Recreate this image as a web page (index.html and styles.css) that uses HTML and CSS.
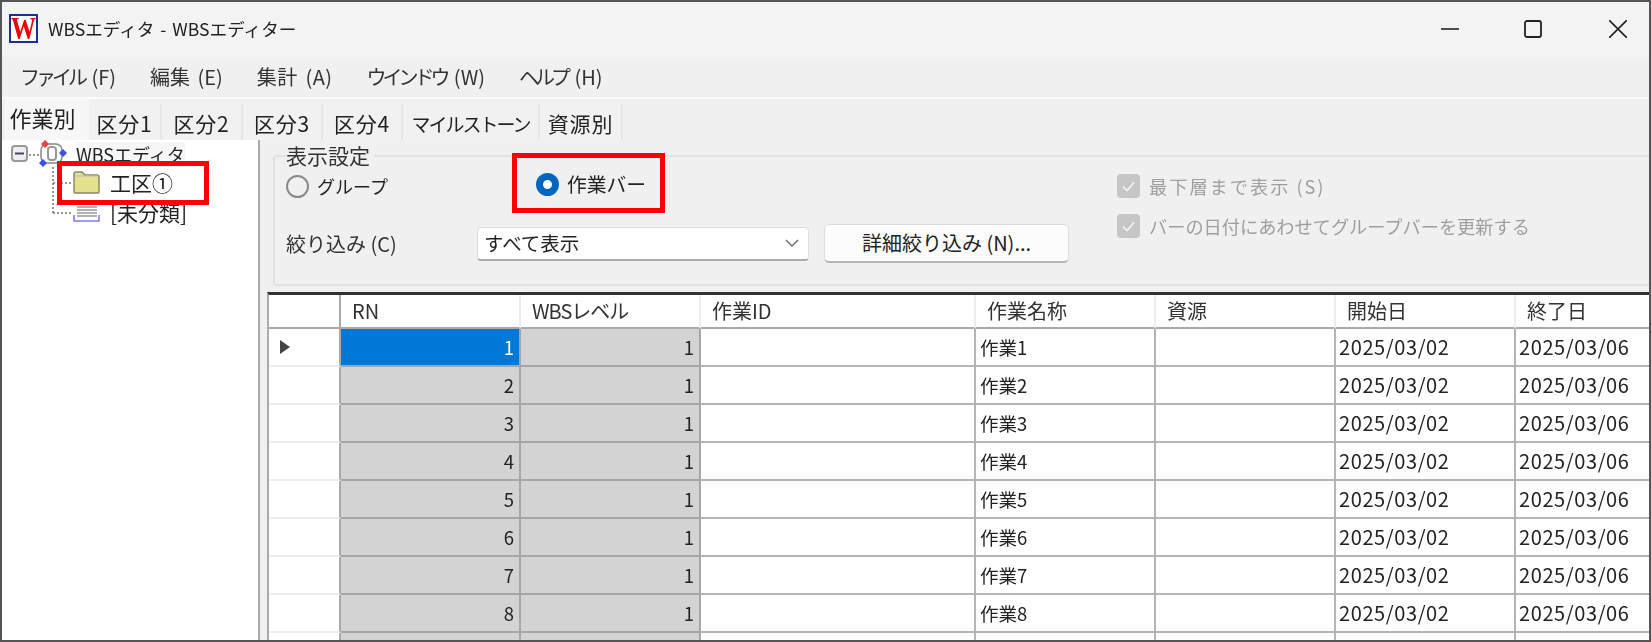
FILE: index.html
```html
<!DOCTYPE html>
<html lang="ja">
<head>
<meta charset="utf-8">
<title>WBSエディタ</title>
<link rel="stylesheet" href="styles.css">
</head>
<body>
<div class="window">
  <header class="titlebar">
    <svg class="app-icon" viewBox="0 0 29 29"><rect x="1" y="1" width="27" height="27" fill="#fff" stroke="#1f2f8f" stroke-width="2"/><text x="14.5" y="19" text-anchor="middle" transform="scale(1 1.3)" class="app-w">W</text></svg>
    <span class="title-text">WBSエディタ - WBSエディター</span>
    <div class="winctl">
      <svg class="ctl ctl-min" viewBox="0 0 18 18"><path d="M0 9h18" stroke="#222" stroke-width="1.6"/></svg>
      <svg class="ctl ctl-max" viewBox="0 0 18 18"><rect x="1" y="1" width="16" height="16" rx="2" fill="none" stroke="#222" stroke-width="1.8"/></svg>
      <svg class="ctl ctl-close" viewBox="0 0 18 18"><path d="M0 0l18 18M18 0L0 18" stroke="#222" stroke-width="1.6"/></svg>
    </div>
  </header>
  <nav class="menubar">
    <span><span class="kana">ファイル</span> (F)</span><span>編集 (E)</span><span class="menu-wide">集計 (A)</span><span><span class="kana">ウインドウ</span> (W)</span><span><span class="kana">ヘルプ</span> (H)</span>
  </nav>
  <div class="tabs">
    <span class="tab tab-active">作業別</span>
    <span class="tab tab-w1">区分1</span>
    <span class="tab tab-w2">区分2</span>
    <span class="tab tab-w3">区分3</span>
    <span class="tab tab-w3">区分4</span>
    <span class="tab tab-kana">マイルストーン</span>
    <span class="tab tab-w4">資源別</span>
  </div>
  <div class="main">
    <aside class="tree">
      <svg class="tree-lines" width="100" height="90"><path d="M27 15H37M51 27V73M51 43H71M51 73H71" fill="none" stroke="#777" stroke-width="1.5" stroke-dasharray="2 2"/></svg>
      <div class="tree-row tree-root">
        <svg class="expander" viewBox="0 0 17 17"><rect x="1" y="1" width="15" height="15" rx="3" fill="#eee" stroke="#999" stroke-width="2"/><path d="M4 8.5h9" stroke="#446" stroke-width="2"/></svg>
        <svg class="root-icon" viewBox="0 0 29 27"><rect x="3" y="4" width="21" height="19" rx="6" fill="#fff" stroke="#888" stroke-width="1.5"/><rect x="10" y="7" width="8" height="13" rx="3" fill="#fff" stroke="#999" stroke-width="2"/><path d="M7 0l4 4-4 4-4-4z" fill="#f04040"/><path d="M25 9l4 4-4 4-4-4z" fill="#4050f0"/><path d="M5 19l4 4-4 4-4-4z" fill="#4050f0"/></svg>
        <span class="root-label">WBSエディタ</span>
      </div>
      <div class="tree-row tree-child tree-folder">
        <svg class="node-icon" viewBox="0 0 27 23"><path d="M1 21V3q0-2 2-2h6l3 3h12q2 0 2 2v15q0 1-1 1H2q-1 0-1-1z" fill="#e3e08e" stroke="#8b8b70" stroke-width="1.5"/><path d="M2 5h23" stroke="#bbb" stroke-width="1"/></svg>
        <span>工区①</span>
      </div>
      <div class="tree-row tree-child tree-list">
        <svg class="node-icon" viewBox="0 0 27 20"><path d="M4 2h20M4 5h20M4 8h20M4 11h20M4 14h20" stroke="#999" stroke-width="1.6"/><path d="M1 13v6h25v-6" fill="none" stroke="#7a7aff" stroke-width="1.5"/></svg>
        <span>[未分類]</span>
      </div>
    </aside>
    <section class="pane">
      <div class="group">
        <div class="legend">表示設定</div>
        <div class="group-body">
          <div class="group-left">
            <div class="radios">
              <label class="radio-item"><span class="radio"></span>グループ</label>
              <label class="radio-item radio-on-item"><span class="radio radio-on"></span>作業バー</label>
            </div>
            <div class="filter-row">
              <span class="filter-label">絞り込み (C)</span>
              <div class="select">すべて表示<svg class="chev" viewBox="0 0 14 8"><path d="M1 1l6 6 6-6" fill="none" stroke="#666" stroke-width="1.3"/></svg></div>
              <div class="button">詳細絞り込み (N)...</div>
            </div>
          </div>
          <div class="checks">
            <div class="check-item check-first"><svg class="check" viewBox="0 0 23 24"><rect width="23" height="24" rx="4" fill="#c6c6c6"/><path d="M6 12.5l4 4 7-8" fill="none" stroke="#f4f4f4" stroke-width="1.6"/></svg>最下層まで表示 (S)</div>
            <div class="check-item"><svg class="check" viewBox="0 0 23 24"><rect width="23" height="24" rx="4" fill="#c6c6c6"/><path d="M6 12.5l4 4 7-8" fill="none" stroke="#f4f4f4" stroke-width="1.6"/></svg>バーの日付にあわせてグループバーを更新する</div>
          </div>
        </div>
      </div>
      <div class="grid">
        <table class="datagrid">
          <colgroup><col class="c-head"><col class="c-std"><col class="c-std"><col class="c-id"><col class="c-std"><col class="c-std"><col class="c-std"><col class="c-last"></colgroup>
          <thead><tr><th></th><th>RN</th><th class="th-kana">WBSレベル</th><th>作業ID</th><th>作業名称</th><th>資源</th><th>開始日</th><th>終了日</th></tr></thead>
          <tbody>
            <tr><td class="rh"><svg class="caret" viewBox="0 0 10 14"><path d="M0 0l10 7-10 7z" fill="#444"/></svg></td><td class="num sel">1</td><td class="num">1</td><td></td><td>作業1</td><td></td><td class="date">2025/03/02</td><td class="date">2025/03/06</td></tr>
            <tr><td class="rh"></td><td class="num">2</td><td class="num">1</td><td></td><td>作業2</td><td></td><td class="date">2025/03/02</td><td class="date">2025/03/06</td></tr>
            <tr><td class="rh"></td><td class="num">3</td><td class="num">1</td><td></td><td>作業3</td><td></td><td class="date">2025/03/02</td><td class="date">2025/03/06</td></tr>
            <tr><td class="rh"></td><td class="num">4</td><td class="num">1</td><td></td><td>作業4</td><td></td><td class="date">2025/03/02</td><td class="date">2025/03/06</td></tr>
            <tr><td class="rh"></td><td class="num">5</td><td class="num">1</td><td></td><td>作業5</td><td></td><td class="date">2025/03/02</td><td class="date">2025/03/06</td></tr>
            <tr><td class="rh"></td><td class="num">6</td><td class="num">1</td><td></td><td>作業6</td><td></td><td class="date">2025/03/02</td><td class="date">2025/03/06</td></tr>
            <tr><td class="rh"></td><td class="num">7</td><td class="num">1</td><td></td><td>作業7</td><td></td><td class="date">2025/03/02</td><td class="date">2025/03/06</td></tr>
            <tr><td class="rh"></td><td class="num">8</td><td class="num">1</td><td></td><td>作業8</td><td></td><td class="date">2025/03/02</td><td class="date">2025/03/06</td></tr>
            <tr><td class="rh"></td><td class="num"></td><td class="num"></td><td></td><td></td><td></td><td></td><td></td></tr>
          </tbody>
        </table>
      </div>
    </section>
  </div>
  <div class="callout callout-tree"></div>
  <div class="callout callout-radio"></div>
</div>
</body>
</html>
```
FILE: styles.css
```css
* { box-sizing: border-box; }
html, body { margin: 0; padding: 0; background: #fff; }
body { font-family: "Noto Sans CJK JP", "Noto Sans", sans-serif; color: #222; font-size: 18px; line-height: 1; }
.window { position: relative; width: 1651px; height: 642px; border: 2px solid #555; overflow: hidden; display: flex; flex-direction: column; background: #f0f0f0; }
.titlebar, .menubar, .tabs, .main { filter: blur(0.4px); }

.titlebar { height: 55px; flex: none; display: flex; align-items: center; background: #f3f3f3; padding-left: 7px; padding-bottom: 2px; }
.app-icon { width: 29px; height: 29px; flex: none; overflow: visible; }
.app-w { font-family: "Liberation Serif", serif; font-weight: 700; font-size: 25px; fill: #f00000; }
.title-text { margin-left: 10px; font-size: 17.6px; word-spacing: 2px; }
.winctl { margin-left: auto; display: flex; align-items: center; }
.ctl { width: 18px; height: 18px; display: block; }
.ctl-max { margin-left: 65px; }
.ctl-close { margin-left: 67px; margin-right: 22px; }

.menubar { height: 40px; flex: none; display: flex; align-items: center; gap: 34px; padding-left: 18px; color: #333; font-size: 20px; word-spacing: 3px; }
.kana { letter-spacing: -4px; }
.menu-wide { letter-spacing: 0.4px; }

.tabs { height: 43px; flex: none; display: flex; align-items: flex-end; border-top: 2px solid #fafafa; padding-left: 3px; }
.tab { height: 36px; display: flex; align-items: center; justify-content: center; background: #f1f1f1; border-right: 2px solid #e6e6e6; font-size: 21px; letter-spacing: 0.8px; flex: none; padding-top: 3px; }
.tab-active { width: 84px; height: 41px; background: #f7f7f7; font-size: 22px; letter-spacing: 0; border-right: 0; padding-top: 0; padding-bottom: 6px; padding-right: 9px; }
.tab-w1 { width: 73px; }
.tab-w2 { width: 81px; }
.tab-w3 { width: 80px; }
.tab-kana { width: 137px; font-size: 19px; letter-spacing: -2px; }
.tab-w4 { width: 83px; }

.main { flex: 1; display: flex; min-height: 0; }
.tree { position: relative; width: 258px; flex: none; background: #fff; border-right: 2px solid #a9a9a9; display: flex; flex-direction: column; overflow: hidden; }
.tree-lines { position: absolute; left: 0; top: 0; }
.tree-row { position: relative; display: flex; align-items: center; flex: none; }
.tree-root { height: 27px; padding-left: 9px; font-size: 18px; }
.expander { width: 17px; height: 17px; flex: none; }
.root-icon { width: 29px; height: 27px; margin-left: 10px; flex: none; }
.root-label { margin-left: 9px; background: #f6f6f6; padding: 3px 0; }
.tree-child { padding-left: 71px; font-size: 21px; }
.tree-folder { height: 30px; }
.tree-list { height: 30px; }
.node-icon { width: 27px; height: 23px; flex: none; margin-right: 10px; }
.tree-list .node-icon { height: 20px; }

.pane { flex: 1; min-width: 0; display: flex; flex-direction: column; padding-top: 15px; }
.group { height: 131px; flex: none; margin-left: 13px; border: 2px solid #e2e2e2; border-right: 0; border-radius: 3px 0 0 3px; padding-left: 11px; }
.legend { width: fit-content; margin-top: -12px; padding-right: 4px; background: #f0f0f0; font-size: 21px; height: 21px; color: #333; }
.group-body { display: flex; }
.group-left { width: 784px; flex: none; }
.radios { display: flex; height: 24px; margin-top: 8px; }
.radio-item { display: flex; align-items: center; width: 250px; flex: none; font-size: 18px; }
.radio { width: 23px; height: 23px; border-radius: 50%; border: 2px solid #8a8a8a; margin-right: 8px; flex: none; }
.radio-on { border: 7px solid #0067c0; background: #fff; }
.radio-on-item { position: relative; top: -2px; font-size: 19.8px; }
.filter-row { display: flex; align-items: center; margin-top: 26px; }
.filter-label { width: 191px; flex: none; font-size: 20px; color: #333; }
.select { width: 332px; height: 34px; flex: none; background: #fff; border: 1px solid #dedede; border-bottom: 2px solid #aaa; border-radius: 4px; display: flex; align-items: center; padding-left: 6px; font-size: 19.5px; }
.chev { width: 14px; height: 8px; margin-left: auto; margin-right: 9px; }
.button { width: 245px; height: 39px; flex: none; margin-left: 15px; background: #fcfcfc; border: 1px solid #ddd; border-bottom: 2px solid #b5b5b5; border-radius: 5px; display: flex; align-items: center; justify-content: center; font-size: 20px; }
.checks { margin-left: 47px; color: #9e9e9e; display: flex; flex-direction: column; gap: 16px; margin-top: 8px; }
.check-item { display: flex; align-items: center; font-size: 18.2px; }
.check-first { letter-spacing: 2px; }
.check { width: 23px; height: 24px; margin-right: 9px; flex: none; }

.grid { flex: 1; min-height: 0; margin-top: 6px; margin-left: 7px; overflow: hidden; border-top: 3px solid #333; border-left: 2px solid #a9a9a9; background: #fff; }
.datagrid { table-layout: fixed; width: 1383px; border-collapse: separate; border-spacing: 0; }
.c-head { width: 72px; }
.c-std { width: 180px; }
.c-id { width: 275px; }
.c-last { width: 136px; }
th, td { padding: 0 8px; overflow: hidden; white-space: nowrap; border-right: 2px solid #b4b4b4; border-bottom: 2px solid #b4b4b4; font-weight: 400; text-align: left; font-size: 18.5px; color: #222; }
th { height: 34px; padding-left: 11px; border-right-color: #ececec; font-size: 20px; border-bottom-color: #aaa; color: #333; }
th:first-child { border-right-color: #aaa; }
.th-kana { letter-spacing: -1px; }
td { height: 38px; padding-left: 4px; }
.date { font-size: 20px; letter-spacing: 0.6px; padding-left: 3px; }
.rh { border-right-color: #aaa; border-bottom-color: #ececec; padding-left: 11px; }
.caret { width: 10px; height: 14px; display: block; }
.num { background: #d3d3d3; text-align: right; padding-right: 5px; border-right-color: #a6a6a6; border-bottom-color: #a6a6a6; }
.sel { background: #0078d7; color: #fff; }

.callout { position: absolute; border: 5px solid #ff0000; }
.callout-tree { left: 55px; top: 159px; width: 152px; height: 44px; }
.callout-radio { left: 510px; top: 151px; width: 153px; height: 60px; }
```
